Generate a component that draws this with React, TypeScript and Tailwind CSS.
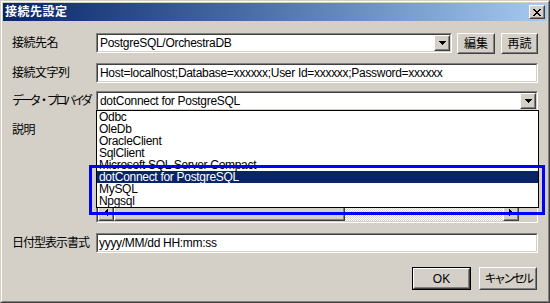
import type { ReactNode } from 'react';

const PROVIDERS = [
  'Odbc',
  'OleDb',
  'OracleClient',
  'SqlClient',
  'Microsoft SQL Server Compact',
  'dotConnect for PostgreSQL',
  'MySQL',
  'Npgsql',
];

function Sunken({ className = '', children }: { className?: string; children?: ReactNode }) {
  return (
    <div className={`border border-t-[#808080] border-l-[#808080] border-b-white border-r-white ${className}`}>
      <div className="h-full border border-t-[#404040] border-l-[#404040] border-b-[#d4d0c8] border-r-[#d4d0c8] bg-white flex items-center">
        {children}
      </div>
    </div>
  );
}

function Raised({ className = '', children }: { className?: string; children?: ReactNode }) {
  return (
    <div className={`border border-t-white border-l-white border-b-[#404040] border-r-[#404040] bg-[#d4d0c8] ${className}`}>
      <div className="w-full h-full border border-t-[#d4d0c8] border-l-[#d4d0c8] border-b-[#808080] border-r-[#808080] flex items-center justify-center">
        {children}
      </div>
    </div>
  );
}

function DownArrow() {
  return (
    <svg width="7" height="4" viewBox="0 0 7 4" shapeRendering="crispEdges">
      <rect x="0" y="0" width="7" height="1" fill="#000" />
      <rect x="1" y="1" width="5" height="1" fill="#000" />
      <rect x="2" y="2" width="3" height="1" fill="#000" />
      <rect x="3" y="3" width="1" height="1" fill="#000" />
    </svg>
  );
}

function SideArrow({ left }: { left?: boolean }) {
  return (
    <svg width="4" height="7" viewBox="0 0 4 7" shapeRendering="crispEdges" className={left ? '' : 'rotate-180'}>
      <rect x="3" y="0" width="1" height="7" fill="#000" />
      <rect x="2" y="1" width="1" height="5" fill="#000" />
      <rect x="1" y="2" width="1" height="3" fill="#000" />
      <rect x="0" y="3" width="1" height="1" fill="#000" />
    </svg>
  );
}

function CloseGlyph() {
  const rows = ['XX....XX', '.XX..XX.', '..XXXX..', '...XX...', '..XXXX..', '.XX..XX.', 'XX....XX'];
  return (
    <svg width="8" height="7" viewBox="0 0 8 7" shapeRendering="crispEdges">
      {rows.flatMap((r, y) =>
        r.split('').map((c, x) => (c === 'X' ? <rect key={`${x}-${y}`} x={x} y={y} width="1" height="1" fill="#000" /> : null))
      )}
    </svg>
  );
}

function Combo({ value, className = '' }: { value: string; className?: string }) {
  return (
    <Sunken className={`h-[20px] ${className}`}>
      <span className="flex-1 pl-[2px] leading-[16px] tracking-[-0.3px] whitespace-nowrap overflow-hidden">{value}</span>
      <Raised className="w-[16px] h-[16px]">
        <DownArrow />
      </Raised>
    </Sunken>
  );
}

export default function App() {
  return (
    <div className="relative w-[550px] h-[303px] text-[12px] text-black font-['Liberation_Sans','Noto_Sans_CJK_JP',sans-serif]">
      <div className="w-full h-full border border-t-[#d4d0c8] border-l-[#d4d0c8] border-b-[#404040] border-r-[#404040]">
        <div className="w-full h-full border border-t-white border-l-white border-b-[#808080] border-r-[#808080] bg-[#d4d0c8] p-px flex flex-col">
          {/* title bar */}
          <div className="h-[18px] bg-gradient-to-r from-[#0a246a] to-[#a6caf0] flex items-center pl-[2px] pr-[2px]">
            <span className="flex-1 text-white font-bold tracking-[0.5px] leading-[18px]">接続先設定</span>
            <Raised className="w-[16px] h-[14px]">
              <CloseGlyph />
            </Raised>
          </div>

          <div className="flex-1 flex flex-col pl-[9px] pr-[9px] pt-[12px]">
            <div className="flex items-start h-[20px]">
              <span className="w-[84px] leading-[20px] tracking-[-0.5px]">接続先名</span>
              <Combo value="PostgreSQL/OrchestraDB" className="w-[356px]" />
              <Raised className="ml-[5px] w-[38px] h-[21px]">編集</Raised>
              <Raised className="ml-[6px] w-[37px] h-[21px]">再読</Raised>
            </div>

            <div className="flex items-center h-[20px] mt-[10px]">
              <span className="w-[84px] tracking-[-0.5px]">接続文字列</span>
              <Sunken className="flex-1 h-[20px]">
                <span className="pl-[2px] tracking-[-0.3px] whitespace-nowrap">Host=localhost;Database=xxxxxx;User Id=xxxxxx;Password=xxxxxx</span>
              </Sunken>
            </div>

            <div className="flex items-center h-[20px] mt-[8px]">
              <span className="w-[84px] tracking-[-3.3px] whitespace-nowrap">データ・プロバイダ</span>
              <Combo value="dotConnect for PostgreSQL" className="flex-1" />
            </div>

            <div className="flex items-start h-[106px] mt-[6px]">
              <span className="w-[84px] pt-[7px] leading-[12px] tracking-[-0.5px]">説明</span>
              <div className="flex-1 h-full border border-t-[#808080] border-l-[#808080] border-b-white border-r-white">
                <div className="h-full border border-t-[#404040] border-l-[#404040] border-b-[#d4d0c8] border-r-[#d4d0c8] bg-white flex flex-col">
                  <div className="flex-1 flex">
                    <div className="flex-1" />
                    <div className="w-[17px] bg-[#d4d0c8]" />
                  </div>
                  <div className="h-[17px] flex">
                    <Raised className="w-[16px] h-[17px]">
                      <SideArrow left />
                    </Raised>
                    <Raised className="w-[231px] h-[17px]" />
                    <div className="flex-1 bg-[image:repeating-conic-gradient(#d4d0c8_0%_25%,#ffffff_0%_50%)] bg-[length:2px_2px]" />
                    <Raised className="w-[16px] h-[17px]">
                      <SideArrow />
                    </Raised>
                    <div className="w-[17px] bg-[#d4d0c8]" />
                  </div>
                </div>
              </div>
            </div>

            <div className="flex items-center h-[20px] mt-[10px]">
              <span className="w-[84px] tracking-[-1px] whitespace-nowrap">日付型表示書式</span>
              <Sunken className="flex-1 h-[20px]">
                <span className="pl-[1px] tracking-[-0.3px]">yyyy/MM/dd HH:mm:ss</span>
              </Sunken>
            </div>

            <div className="flex justify-end h-[23px] mt-[14px] pr-px">
              <div className="w-[59px] h-[23px] border border-black">
                <Raised className="w-full h-full">OK</Raised>
              </div>
              <Raised className="ml-[8px] w-[58px] h-[23px] tracking-[-2.6px]">キャンセル</Raised>
            </div>
          </div>
        </div>
      </div>

      {/* open dropdown list */}
      <div className="absolute left-[96px] top-[110px] w-[443px] h-[98px] border border-black bg-white overflow-hidden">
        {PROVIDERS.map((p, i) => (
          <div
            key={p}
            className={`h-[12px] leading-[12px] pl-[2px] tracking-[-0.3px] whitespace-nowrap ${i === 5 ? 'bg-[#0a246a] text-white' : ''}`}
          >
            {p}
          </div>
        ))}
      </div>

      {/* highlight annotation */}
      <div className="absolute left-[89px] top-[165px] w-[456px] h-[50px] border-[3px] border-[#0000ff]" />
    </div>
  );
}
